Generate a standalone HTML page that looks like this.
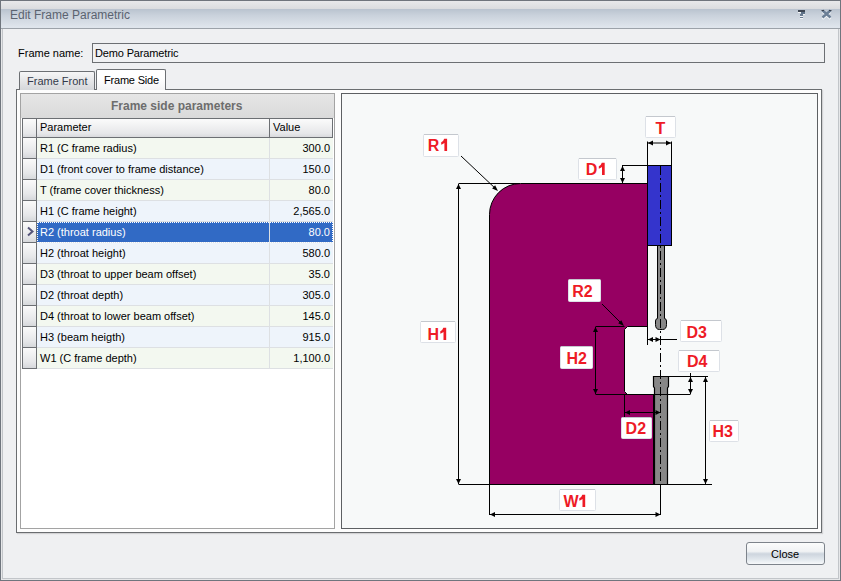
<!DOCTYPE html>
<html><head><meta charset="utf-8">
<style>
*{margin:0;padding:0;box-sizing:border-box}
html,body{width:841px;height:581px;overflow:hidden;background:#eff0f2;font-family:"Liberation Sans",sans-serif;font-size:11px;color:#000}
.a{position:absolute}
#win{left:0;top:0;width:841px;height:581px;border:1px solid #6f757d;}
#inner{left:1px;top:29px;width:839px;height:551px;border-left:1px solid #e6e7e9;border-right:1px solid #e6e7e9;border-bottom:1px solid #e6e7e9;background:#eff0f2}
#inner2{left:2px;top:29px;width:837px;height:550px;border-left:1px solid #c2c5c9;border-right:1px solid #c2c5c9;border-bottom:1px solid #c2c5c9}
#title{left:1px;top:1px;width:839px;height:28px;background:linear-gradient(#e8e9eb 0,#dadcdf 8px,#b9c3cf 8px,#c9d1db 14px,#dfe5ec 26px);border-bottom:1px solid #9ca2a9}
#title span{position:absolute;left:9px;top:7px;font-size:12px;color:#5b6370}
.lbl{white-space:nowrap}
#tb{left:92px;top:43px;width:733px;height:20px;border:1px solid #6c6f73;background:#f0f1f3}
#tb span{position:absolute;left:2px;top:3px;letter-spacing:-0.15px}
.tab{border:1px solid #6c6f73;border-bottom:none;border-radius:2px 2px 0 0}
#tabF{left:19px;top:71px;width:76px;height:19px;background:linear-gradient(#f6f6f7,#e2e3e5 60%,#d5d7da)}
#tabS{left:96px;top:69px;width:70px;height:21px;background:linear-gradient(#fff 40%,#f3f3f4)}
#page{left:16px;top:89px;width:806px;height:444px;border:1px solid #6a6d70;background:#fdfdfd;box-shadow:1px 1px 1px rgba(0,0,0,0.12)}
#grid{left:20px;top:93px;width:315px;height:436px;border:1px solid #a3a3a3;background:#fff}
#gh{left:21px;top:94px;width:313px;height:24px;background:linear-gradient(#e6e6e6,#dadada);}
#gh span{position:absolute;left:90px;top:5px;font-weight:bold;font-size:12px;color:#6d6d6d}
#colh{left:22px;top:118px;width:311px;height:20px;border:1px solid #6c6f73;background:linear-gradient(#fbfbfb,#e6e7e9 80%,#d9dadd)}
.row{position:absolute;left:22px;width:311px;height:21px}
.ind{position:absolute;left:0;top:0;width:15px;height:21px;border-left:1px solid #6c6f73;border-right:1px solid #6c6f73;border-bottom:1px solid #6c6f73;background:linear-gradient(#fafafa,#e6e7e9 70%,#d6d8db)}
.c1{position:absolute;left:15px;top:0;width:233px;height:21px;border-right:1px solid #dde0e3;border-bottom:1px solid #dde0e3}
.c2{position:absolute;left:248px;top:0;width:63px;height:21px;border-bottom:1px solid #dde0e3}
.c1 span{position:absolute;left:3px;top:4px}
.c2 span{position:absolute;right:3px;top:4px}
.odd .c1,.odd .c2{background:#f3f8f0}
.even .c1,.even .c2{background:#eef4fb}
.sel .c1,.sel .c2{background:#316ac5;color:#fff}
#diag{left:341px;top:93px;width:477px;height:436px;border:1px solid #5d6063;background:#f7f9f9}
#close{left:746px;top:542px;width:79px;height:23px;border:1px solid #7d838b;border-radius:3px;background:linear-gradient(#fbfcfc 0,#f0f2f4 40%,#cdd5de 52%,#dfe5eb 75%,#f6f8fa 100%)}
#close span{position:absolute;left:24px;top:5px}
svg{position:absolute;left:0;top:0}
</style></head><body>
<div class="a" id="win"></div>
<div class="a" id="title"><span>Edit Frame Parametric</span></div>
<svg width="841" height="30" style="position:absolute;left:0;top:0">
<g shape-rendering="crispEdges">
<rect x="798" y="10" width="7" height="2" fill="#3e4652"/>
<rect x="798" y="12" width="3" height="1" fill="#f4f6f8"/>
<rect x="801" y="12" width="4" height="2" fill="#5f7288"/>
<rect x="800" y="14" width="5" height="1" fill="#f0f3f6"/>
<rect x="800" y="14" width="3" height="2" fill="#6a7c92"/>
<rect x="800" y="16" width="3" height="1" fill="#f4f6f8"/>
<rect x="800" y="17" width="3" height="1" fill="#6a7c92"/>
<rect x="800" y="18" width="3" height="1" fill="#f4f6f8"/>
</g>
<path d="M822.5,11 L830.5,18 M830.5,11 L822.5,18" stroke="#f4f6f8" stroke-width="2.2" transform="translate(0,1)"/>
<path d="M822.5,10.5 L830.5,17.5 M830.5,10.5 L822.5,17.5" stroke="#6b7f96" stroke-width="2.4"/>
<path d="M821.5,10.5 L824,10.5 M829,10.5 L831.5,10.5" stroke="#3a424e" stroke-width="1.2"/>
</svg>
<div class="a" id="inner"></div><div class="a" id="inner2"></div>

<div class="a lbl" style="left:18px;top:47px">Frame name:</div>
<div class="a" id="tb"><span>Demo Parametric</span></div>

<div class="a" id="page"></div>
<div class="a tab" id="tabF"><span class="a lbl" style="left:7px;top:3px;color:#333a4a">Frame Front</span></div>
<div class="a tab" id="tabS"><span class="a lbl" style="left:7px;top:4px;letter-spacing:-0.2px">Frame Side</span></div>

<div class="a" id="grid"></div>
<div class="a" id="gh"><span>Frame side parameters</span></div>
<div class="a" id="colh">
  <div class="a" style="left:0;top:0;width:14px;height:18px;border-right:1px solid #6c6f73"></div>
  <span class="a lbl" style="left:17px;top:2px">Parameter</span>
  <div class="a" style="left:246px;top:0;width:1px;height:18px;background:#6c6f73"></div>
  <span class="a lbl" style="left:250px;top:2px">Value</span>
</div>
<div class="row odd" style="top:138px"><div class="ind"></div><div class="c1"><span>R1 (C frame radius)</span></div><div class="c2"><span>300.0</span></div></div>
<div class="row even" style="top:159px"><div class="ind"></div><div class="c1"><span>D1 (front cover to frame distance)</span></div><div class="c2"><span>150.0</span></div></div>
<div class="row odd" style="top:180px"><div class="ind"></div><div class="c1"><span>T (frame cover thickness)</span></div><div class="c2"><span>80.0</span></div></div>
<div class="row even" style="top:201px"><div class="ind"></div><div class="c1"><span>H1 (C frame height)</span></div><div class="c2"><span>2,565.0</span></div></div>
<div class="row sel" style="top:222px"><div class="ind"><svg width="14" height="20" style="position:absolute;left:0;top:0"><path d="M5,5.5 L9.5,9.5 L5,13.5" fill="none" stroke="#55557a" stroke-width="2"/></svg></div><div class="a" style="left:15px;top:0;width:296px;height:21px;border:1px dotted #fff;z-index:2"></div><div class="c1"><span>R2 (throat radius)</span></div><div class="c2"><span>80.0</span></div></div>
<div class="row even" style="top:243px"><div class="ind"></div><div class="c1"><span>H2 (throat height)</span></div><div class="c2"><span>580.0</span></div></div>
<div class="row odd" style="top:264px"><div class="ind"></div><div class="c1"><span>D3 (throat to upper beam offset)</span></div><div class="c2"><span>35.0</span></div></div>
<div class="row even" style="top:285px"><div class="ind"></div><div class="c1"><span>D2 (throat depth)</span></div><div class="c2"><span>305.0</span></div></div>
<div class="row odd" style="top:306px"><div class="ind"></div><div class="c1"><span>D4 (throat to lower beam offset)</span></div><div class="c2"><span>145.0</span></div></div>
<div class="row even" style="top:327px"><div class="ind"></div><div class="c1"><span>H3 (beam heigth)</span></div><div class="c2"><span>915.0</span></div></div>
<div class="row odd" style="top:348px"><div class="ind"></div><div class="c1"><span>W1 (C frame depth)</span></div><div class="c2"><span>1,100.0</span></div></div>

<div class="a" id="diag"></div>

<!--DIAG--><svg width="841" height="581" viewBox="0 0 841 581" style="font-family:'Liberation Sans',sans-serif;font-weight:bold;font-size:16px;fill:#ee1b26"><path fill="#960062" stroke="#000" stroke-width="1" d="M489.5,214.5 A31,31 0 0 1 520.5,183.5 L647.5,183.5 L647.5,326.5 L627.5,326.5 L624.5,329.5 L624.5,391.5 L627.5,394.5 L653.5,394.5 L653.5,484.5 L489.5,484.5 Z"/>
<rect x="647.5" y="165.5" width="24" height="80" fill="#3434cc" stroke="#000" stroke-width="1"/>
<path fill="#878787" stroke="#000" stroke-width="1" d="M657.5,245.5 L657.5,318.5 Q655.5,318.8 655.5,321 L655.5,324.5 Q655.5,329.5 659.5,329.5 L662.5,329.5 Q666.5,329.5 666.5,324.5 L666.5,321 Q666.5,318.8 664.5,318.5 L664.5,245.5 Z"/>
<path fill="#878787" stroke="#000" stroke-width="1.2" d="M653.5,376.5 L668.5,376.5 L668.5,386.5 L667.5,388 L667.5,484.5 L654.5,484.5 L654.5,388 L653.5,386.5 Z"/>
<g stroke="#000" stroke-width="1" fill="none"><line x1="458.5" y1="183.5" x2="520" y2="183.5"/><line x1="458.5" y1="484.5" x2="712" y2="484.5"/><line x1="458.5" y1="184" x2="458.5" y2="484"/><line x1="461" y1="156" x2="497" y2="190"/><line x1="647.5" y1="141.5" x2="647.5" y2="166"/><line x1="671.5" y1="141.5" x2="671.5" y2="166"/><line x1="648" y1="143" x2="671" y2="143"/><line x1="622" y1="165.5" x2="648" y2="165.5"/><line x1="622.5" y1="166" x2="622.5" y2="183"/><line x1="602" y1="304" x2="623" y2="325"/><line x1="595.5" y1="326.5" x2="624.5" y2="326.5"/><line x1="595.5" y1="394.5" x2="690.5" y2="394.5"/><line x1="595.5" y1="327" x2="595.5" y2="394"/><line x1="647.5" y1="326" x2="647.5" y2="345"/><line x1="648" y1="339.5" x2="677" y2="339.5"/><line x1="668" y1="376.5" x2="708" y2="376.5"/><line x1="690.5" y1="373" x2="690.5" y2="394"/><line x1="705.5" y1="377" x2="705.5" y2="484"/><line x1="624.5" y1="394" x2="624.5" y2="418"/><line x1="625" y1="412.5" x2="660" y2="412.5"/><line x1="489.5" y1="484" x2="489.5" y2="515"/><line x1="490" y1="514.5" x2="660" y2="514.5"/><line x1="660.5" y1="484" x2="660.5" y2="515"/></g>
<g fill="#000" stroke="none"><path d="M458.50,184.00 L461.00,189.00 L456.00,189.00 Z"/><path d="M458.50,484.00 L456.00,479.00 L461.00,479.00 Z"/><path d="M498.00,191.00 L492.13,188.48 L495.15,185.28 Z"/><path d="M648.00,143.00 L653.00,140.50 L653.00,145.50 Z"/><path d="M671.00,143.00 L666.00,145.50 L666.00,140.50 Z"/><path d="M622.50,166.00 L625.00,171.00 L620.00,171.00 Z"/><path d="M622.50,183.00 L620.00,178.00 L625.00,178.00 Z"/><path d="M624.00,326.00 L618.20,323.31 L621.31,320.20 Z"/><path d="M595.50,327.00 L598.00,332.00 L593.00,332.00 Z"/><path d="M595.50,394.00 L593.00,389.00 L598.00,389.00 Z"/><path d="M648.00,339.50 L653.00,337.00 L653.00,342.00 Z"/><path d="M660.50,339.50 L655.50,342.00 L655.50,337.00 Z"/><path d="M690.50,377.00 L693.00,382.00 L688.00,382.00 Z"/><path d="M690.50,394.00 L688.00,389.00 L693.00,389.00 Z"/><path d="M705.50,377.00 L708.00,382.00 L703.00,382.00 Z"/><path d="M705.50,484.00 L703.00,479.00 L708.00,479.00 Z"/><path d="M625.00,412.50 L630.00,410.00 L630.00,415.00 Z"/><path d="M660.50,412.50 L655.50,415.00 L655.50,410.00 Z"/><path d="M490.00,514.50 L495.00,512.00 L495.00,517.00 Z"/><path d="M660.50,514.50 L655.50,517.00 L655.50,512.00 Z"/></g>
<line x1="660.5" y1="166" x2="660.5" y2="517" stroke="#000" stroke-width="1" stroke-dasharray="9,3,2,3"/>
<rect x="423.5" y="134.5" width="35" height="22" rx="1" fill="#fff" stroke="#dde1e7"/>
<line x1="424" y1="134.5" x2="458" y2="134.5" stroke="#c4c8ce"/>
<text x="427.80" y="151.00">R</text>
<path d="M444.20,138.80 L447.10,138.80 L447.10,151.00 L444.40,151.00 L444.40,143.10 Q442.80,144.40 441.20,144.80 L441.20,142.30 Q443.50,141.40 444.20,138.80 Z"/>
<rect x="645.5" y="116.5" width="30" height="21" rx="1" fill="#fff" stroke="#dde1e7"/>
<line x1="646" y1="116.5" x2="675" y2="116.5" stroke="#c4c8ce"/>
<text x="655.40" y="134.00">T</text>
<rect x="578.5" y="158.5" width="38" height="21" rx="1" fill="#fff" stroke="#dde1e7"/>
<line x1="579" y1="158.5" x2="616" y2="158.5" stroke="#c4c8ce"/>
<text x="585.80" y="175.00">D</text>
<path d="M601.80,162.80 L604.70,162.80 L604.70,175.00 L602.00,175.00 L602.00,167.10 Q600.40,168.40 598.80,168.80 L598.80,166.30 Q601.10,165.40 601.80,162.80 Z"/>
<rect x="568.5" y="279.5" width="32" height="22" rx="1" fill="#fff" stroke="#dde1e7"/>
<line x1="569" y1="279.5" x2="600" y2="279.5" stroke="#c4c8ce"/>
<text x="572.20" y="296.50">R2</text>
<rect x="560.5" y="346.5" width="32" height="22" rx="1" fill="#fff" stroke="#dde1e7"/>
<line x1="561" y1="346.5" x2="592" y2="346.5" stroke="#c4c8ce"/>
<text x="566.40" y="363.50">H2</text>
<rect x="680.5" y="320.5" width="41" height="21" rx="1" fill="#fff" stroke="#dde1e7"/>
<line x1="681" y1="320.5" x2="721" y2="320.5" stroke="#c4c8ce"/>
<text x="686.40" y="338.00">D3</text>
<rect x="678.5" y="350.5" width="41" height="21" rx="1" fill="#fff" stroke="#dde1e7"/>
<line x1="679" y1="350.5" x2="719" y2="350.5" stroke="#c4c8ce"/>
<text x="687.00" y="366.50">D4</text>
<rect x="420.5" y="321.5" width="35" height="21" rx="1" fill="#fff" stroke="#dde1e7"/>
<line x1="421" y1="321.5" x2="455" y2="321.5" stroke="#c4c8ce"/>
<text x="427.40" y="340.00">H</text>
<path d="M443.30,327.80 L446.20,327.80 L446.20,340.00 L443.50,340.00 L443.50,332.10 Q441.90,333.40 440.30,333.80 L440.30,331.30 Q442.60,330.40 443.30,327.80 Z"/>
<rect x="621.5" y="417.5" width="30" height="21" rx="1" fill="#fff" stroke="#dde1e7"/>
<line x1="622" y1="417.5" x2="651" y2="417.5" stroke="#c4c8ce"/>
<text x="625.60" y="434.40">D2</text>
<rect x="709.5" y="420.5" width="29" height="21" rx="1" fill="#fff" stroke="#dde1e7"/>
<line x1="710" y1="420.5" x2="738" y2="420.5" stroke="#c4c8ce"/>
<text x="712.40" y="437.00">H3</text>
<rect x="559.5" y="489.5" width="36" height="21" rx="1" fill="#fff" stroke="#dde1e7"/>
<line x1="560" y1="489.5" x2="595" y2="489.5" stroke="#c4c8ce"/>
<text x="563.40" y="507.00">W</text>
<path d="M582.30,494.80 L585.20,494.80 L585.20,507.00 L582.50,507.00 L582.50,499.10 Q580.90,500.40 579.30,500.80 L579.30,498.30 Q581.60,497.40 582.30,494.80 Z"/></svg><!--/DIAG-->
<div class="a" id="close"><span>Close</span></div>
</body></html>
